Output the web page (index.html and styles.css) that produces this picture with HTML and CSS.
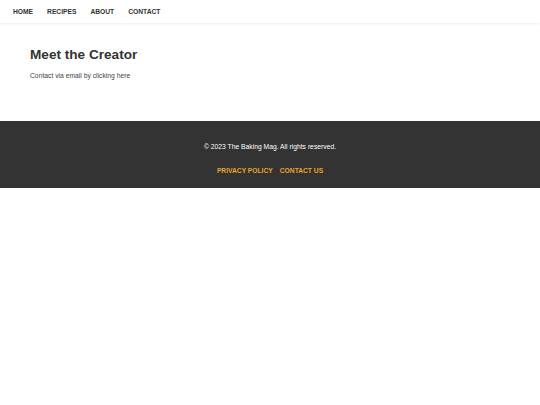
FILE: index.html
```html
<!DOCTYPE html>
<html lang="en">
<head>
<meta charset="utf-8">
<title>Meet the Creator - The Baking Mag</title>
<link rel="stylesheet" href="styles.css">
</head>
<body>
<header class="site-header">
  <nav class="main-nav">
    <a href="#" class="nav-link">Home</a>
    <a href="#" class="nav-link">Recipes</a>
    <a href="#" class="nav-link">About</a>
    <a href="#" class="nav-link">Contact</a>
  </nav>
</header>
<main class="content">
  <h1 class="page-title">Meet the Creator</h1>
  <p class="page-text">Contact via email by clicking here</p>
</main>
<footer class="site-footer">
  <p class="copyright">© 2023 The Baking Mag. All rights reserved.</p>
  <div class="footer-links">
    <a href="#" class="footer-link">Privacy Policy</a>
    <a href="#" class="footer-link">Contact Us</a>
  </div>
</footer>
</body>
</html>
```
FILE: styles.css
```css
* { box-sizing: border-box; }

body {
  margin: 0;
  font-family: "Liberation Sans", Arial, sans-serif;
  color: #333;
  background: #fff;
}

.site-header {
  height: 23px;
  background: #fff;
  box-shadow: 0 1px 3px rgba(0, 0, 0, 0.08);
}

.main-nav {
  display: flex;
  align-items: center;
  height: 100%;
  padding-left: 6px;
}

.nav-link {
  padding: 0 7px;
  font-size: 6.7px;
  font-weight: bold;
  text-transform: uppercase;
  color: #333;
  text-decoration: none;
}

.content {
  height: 98px;
  padding: 24px 30px 0;
}

.page-title {
  margin: 0;
  font-size: 13.6px;
  font-weight: bold;
  color: #333;
  line-height: 16px;
}

.page-text {
  margin: 9px 0 0;
  font-size: 6.75px;
  color: #444;
}

.site-footer {
  height: 67px;
  background: #333;
  color: #fff;
  text-align: center;
  padding-top: 22px;
}

.copyright {
  margin: 0;
  font-size: 6.75px;
  line-height: 8px;
}

.footer-links {
  display: flex;
  justify-content: center;
  gap: 7px;
  margin-top: 16px;
}

.footer-link {
  font-size: 6.7px;
  font-weight: bold;
  text-transform: uppercase;
  color: #e8a530;
  text-decoration: none;
}
```
